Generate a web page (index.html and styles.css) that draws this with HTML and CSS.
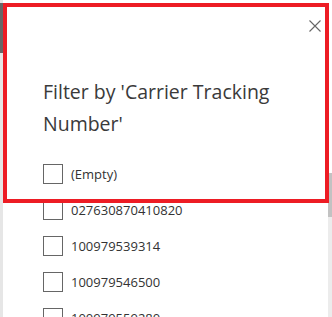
FILE: index.html
```html
<!DOCTYPE html>
<html lang="en">
<head>
<meta charset="utf-8">
<title>Filter by 'Carrier Tracking Number'</title>
<link rel="stylesheet" href="styles.css">
</head>
<body>
<div class="page">
  <div class="backdrop">
    <div class="backdrop-header"></div>
  </div>
  <aside class="panel">
    <div class="panel-head">
      <button class="close" aria-label="Close">
        <svg width="12" height="12" viewBox="0 0 12 12"><path d="M0.5 0.5 L11.5 11.5 M11.5 0.5 L0.5 11.5" stroke="#666" stroke-width="1.1" fill="none"/></svg>
      </button>
    </div>
    <h2 class="title">Filter by 'Carrier Tracking Number'</h2>
    <ul class="options">
      <li class="option"><span class="box"></span><span class="label">(Empty)</span></li>
      <li class="option"><span class="box"></span><span class="label">027630870410820</span></li>
      <li class="option"><span class="box"></span><span class="label">100979539314</span></li>
      <li class="option"><span class="box"></span><span class="label">100979546500</span></li>
      <li class="option"><span class="box"></span><span class="label">100979559280</span></li>
    </ul>
  </aside>
  <div class="scrollbar">
    <div class="scroll-top"></div>
    <div class="thumb"></div>
  </div>
</div>
<div class="highlight"></div>
</body>
</html>
```
FILE: styles.css
```css
html, body {
  margin: 0;
  padding: 0;
}
body {
  width: 332px;
  height: 317px;
  overflow: hidden;
  position: relative;
  background: #e8e8e8;
  font-family: "Open Sans", "Noto Sans", sans-serif;
  color: #333;
}
.page {
  display: grid;
  grid-template-columns: 3px 325px 4px;
  height: 317px;
  overflow: hidden;
}
.backdrop {
  background: #e6e6e6;
  padding-top: 3px;
}
.backdrop-header {
  height: 50px;
  background: #666;
}
.panel {
  background: #fff;
  padding-left: 40px;
  padding-right: 6px;
  overflow: hidden;
}
.panel-head {
  display: flex;
  justify-content: flex-end;
  padding-top: 20px;
}
.close {
  border: 0;
  background: none;
  padding: 0;
  margin: 0;
  width: 12px;
  height: 12px;
  display: block;
  margin-right: 1px;
}
.close svg {
  display: block;
}
.title {
  margin: 44px 0 0 0;
  font-size: 19.5px;
  font-weight: 400;
  line-height: 32px;
  color: #3a3a3a;
  max-width: 250px;
}
.options {
  list-style: none;
  margin: 16px 0 0 0;
  padding: 0;
}
.option {
  display: flex;
  align-items: center;
  gap: 8px;
  height: 36px;
}
.box {
  width: 18px;
  height: 18px;
  border: 1px solid #666;
  flex: none;
}
.label {
  font-size: 13px;
  color: #333;
}
.scrollbar {
  display: flex;
  flex-direction: column;
  background: #ececec;
}
.scroll-top {
  height: 173px;
  background: #fff;
}
.thumb {
  height: 44px;
  background: #c2c2c2;
}
.highlight {
  position: absolute;
  left: 3px;
  top: 3px;
  width: 318px;
  height: 192px;
  border: 4px solid #ed1c24;
  pointer-events: none;
}
```
